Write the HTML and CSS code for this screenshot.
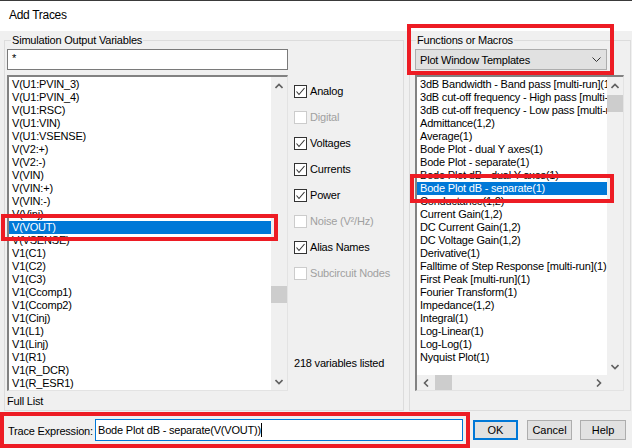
FILE: index.html
```html
<!DOCTYPE html>
<html lang="en">
<head>
  <meta charset="UTF-8" />
  <title>Add Traces</title>
  <link rel="stylesheet" href="styles.css">
</head>
<body>
  <div class="titlebar">Add Traces</div>

  <div class="panes">
    <div class="group group-left">
      <div class="group-title">Simulation Output Variables</div>
      <div class="filter">*</div>
      <div class="left-body">
        <div class="list list-left">
          <div class="items">
            <div class="item">V(U1:PVIN_3)</div>
            <div class="item">V(U1:PVIN_4)</div>
            <div class="item">V(U1:RSC)</div>
            <div class="item">V(U1:VIN)</div>
            <div class="item">V(U1:VSENSE)</div>
            <div class="item">V(V2:+)</div>
            <div class="item">V(V2:-)</div>
            <div class="item">V(VIN)</div>
            <div class="item">V(VIN:+)</div>
            <div class="item">V(VIN:-)</div>
            <div class="item">V(Vinj)</div>
            <div class="item sel">V(VOUT)</div>
            <div class="item">V(VSENSE)</div>
            <div class="item">V1(C1)</div>
            <div class="item">V1(C2)</div>
            <div class="item">V1(C3)</div>
            <div class="item">V1(Ccomp1)</div>
            <div class="item">V1(Ccomp2)</div>
            <div class="item">V1(Cinj)</div>
            <div class="item">V1(L1)</div>
            <div class="item">V1(Linj)</div>
            <div class="item">V1(R1)</div>
            <div class="item">V1(R_DCR)</div>
            <div class="item">V1(R_ESR1)</div>
          </div>
          <div class="vscroll">
            <div class="arrow"><svg width="8" height="6"><polyline points="0.5,5 4,1.5 7.5,5" /></svg></div>
            <div class="track"><div class="thumb thumb-left"></div></div>
            <div class="arrow"><svg width="8" height="6"><polyline points="0.5,1 4,4.5 7.5,1" /></svg></div>
          </div>
        </div>

        <div class="checks">
          <div class="check"><span class="box on"><svg width="11" height="11"><polyline points="1.5,5.5 4,8.5 9.5,2" /></svg></span>Analog</div>
          <div class="check off"><span class="box"></span>Digital</div>
          <div class="check"><span class="box on"><svg width="11" height="11"><polyline points="1.5,5.5 4,8.5 9.5,2" /></svg></span>Voltages</div>
          <div class="check"><span class="box on"><svg width="11" height="11"><polyline points="1.5,5.5 4,8.5 9.5,2" /></svg></span>Currents</div>
          <div class="check"><span class="box on"><svg width="11" height="11"><polyline points="1.5,5.5 4,8.5 9.5,2" /></svg></span>Power</div>
          <div class="check off"><span class="box"></span>Noise (V²/Hz)</div>
          <div class="check"><span class="box on"><svg width="11" height="11"><polyline points="1.5,5.5 4,8.5 9.5,2" /></svg></span>Alias Names</div>
          <div class="check off"><span class="box"></span>Subcircuit Nodes</div>
          <div class="count">218 variables listed</div>
        </div>
      </div>
      <div class="full-list">Full List</div>
    </div>

    <div class="group group-right">
      <div class="group-title">Functions or Macros</div>
      <div class="combo">
        <span>Plot Window Templates</span>
        <svg width="9" height="5"><polyline points="0.5,0.5 4.5,4.5 8.5,0.5" /></svg>
      </div>
      <div class="list list-right">
        <div class="items">
          <div class="item">3dB Bandwidth - Band pass [multi-run](1)</div>
          <div class="item">3dB cut-off frequency - High pass [multi-run](1)</div>
          <div class="item">3dB cut-off frequency - Low pass [multi-run](1)</div>
          <div class="item">Admittance(1,2)</div>
          <div class="item">Average(1)</div>
          <div class="item">Bode Plot - dual Y axes(1)</div>
          <div class="item">Bode Plot - separate(1)</div>
          <div class="item">Bode Plot dB - dual Y axes(1)</div>
          <div class="item sel">Bode Plot dB - separate(1)</div>
          <div class="item">Conductance(1,2)</div>
          <div class="item">Current Gain(1,2)</div>
          <div class="item">DC Current Gain(1,2)</div>
          <div class="item">DC Voltage Gain(1,2)</div>
          <div class="item">Derivative(1)</div>
          <div class="item">Falltime of Step Response [multi-run](1)</div>
          <div class="item">First Peak [multi-run](1)</div>
          <div class="item">Fourier Transform(1)</div>
          <div class="item">Impedance(1,2)</div>
          <div class="item">Integral(1)</div>
          <div class="item">Log-Linear(1)</div>
          <div class="item">Log-Log(1)</div>
          <div class="item">Nyquist Plot(1)</div>
        </div>
        <div class="vscroll">
          <div class="arrow"><svg width="8" height="6"><polyline points="0.5,5 4,1.5 7.5,5" /></svg></div>
          <div class="track"><div class="thumb thumb-right"></div></div>
          <div class="arrow"><svg width="8" height="6"><polyline points="0.5,1 4,4.5 7.5,1" /></svg></div>
        </div>
        <div class="hscroll">
          <div class="arrow"><svg width="6" height="8"><polyline points="5,0.5 1.5,4 5,7.5" /></svg></div>
          <div class="hthumb"></div>
          <div class="htrack"></div>
          <div class="arrow"><svg width="6" height="8"><polyline points="1,0.5 4.5,4 1,7.5" /></svg></div>
        </div>
        <div class="corner"></div>
      </div>
    </div>
  </div>

  <div class="bottom">
    <label class="expr-label">Trace Expression:</label>
    <div class="expr">Bode Plot dB - separate(V(VOUT))<span class="caret"></span></div>
    <button class="btn btn-ok">OK</button>
    <button class="btn btn-cancel">Cancel</button>
    <button class="btn btn-help">Help</button>
  </div>

  <!-- red highlight boxes drawn over the dialog -->
  <div class="mark mark-vout"></div>
  <div class="mark mark-combo"></div>
  <div class="mark mark-bode"></div>
  <div class="mark mark-expr"></div>
</body>
</html>
```

FILE: styles.css
```css
:root {
  --fundo: #f0f0f0;
  --azul: #0078d7;
  --vermelho: #ed1c24;
  --borda: #adadad;
}

* {
  margin: 0;
  padding: 0;
  box-sizing: border-box;
}

body {
  width: 632px;
  height: 448px;
  overflow: hidden;
  position: relative;
  background: var(--fundo);
  font-family: 'Liberation Sans', Arial, sans-serif;
  font-size: 11px;
  letter-spacing: -0.2px;
  color: #000;
}

.titlebar {
  height: 31px;
  background: #fff;
  border-top: 1px solid #3a3a3a;
  padding-left: 9px;
  line-height: 29px;
  font-size: 12px;
  letter-spacing: -0.3px;
}

.panes {
  display: flex;
  gap: 5px;
  padding: 9px 0 0 4px;
}

.group {
  height: 371px;
  border: 1px solid #dcdcdc;
}

.group-left {
  width: 400px;
}

.group-right {
  width: 222px;
}

.group-title {
  width: fit-content;
  margin: -7px 0 0 6px;
  padding: 0 1px;
  background: var(--fundo);
  line-height: 13px;
}

.filter {
  margin: 2px 0 0 2px;
  width: 281px;
  height: 21px;
  border: 1px solid #7a7a7a;
  background: #fff;
  padding-left: 4px;
  line-height: 17px;
}

.left-body {
  display: flex;
  margin-top: 5px;
}

/* list boxes */
.list {
  height: 316px;
  background: #fff;
  border-style: solid;
  border-width: 2px 1px 1px 2px;
  border-color: #828282 #e3e3e3 #e3e3e3 #828282;
}

.list-left {
  margin-left: 2px;
  width: 281px;
  display: flex;
}

.list-right {
  margin: 5px 0 0 5px;
  width: 209px;
  display: grid;
  grid-template-columns: 1fr 16px;
  grid-template-rows: 1fr 15px;
}

.items {
  flex: 1;
  overflow: hidden;
  padding-top: 1px;
}

.item {
  line-height: 13px;
  padding-left: 3px;
  white-space: nowrap;
}

.item.sel {
  background: var(--azul);
  color: #fff;
}

.vscroll {
  width: 16px;
  display: flex;
  flex-direction: column;
  background: var(--fundo);
}

.track {
  flex: 1;
}

.arrow {
  height: 17px;
  display: flex;
  align-items: center;
  justify-content: center;
}

.arrow svg polyline,
.combo svg polyline {
  fill: none;
  stroke: #606060;
  stroke-width: 1.6;
}

.thumb {
  height: 17px;
  background: #cdcdcd;
}

.thumb-left {
  margin-top: 192px;
}

.thumb-right {
  margin-top: 1px;
}

.hscroll {
  display: flex;
  background: var(--fundo);
}

.hscroll .arrow {
  width: 17px;
  height: 15px;
}

.hthumb {
  width: 17px;
  margin-left: 1px;
  background: #cdcdcd;
}

.htrack {
  flex: 1;
}

.corner {
  background: var(--fundo);
}

/* checkboxes */
.checks {
  margin-left: 6px;
  height: 316px;
  padding: 10px 0 21px;
  display: flex;
  flex-direction: column;
  white-space: nowrap;
}

.check {
  display: flex;
  align-items: center;
  gap: 3px;
  height: 13px;
  margin-bottom: 13px;
  line-height: 13px;
}

.box {
  width: 13px;
  height: 13px;
  border: 1px solid #cccccc;
  background: #fff;
  display: flex;
}

.box.on {
  border-color: #333;
}

.box svg polyline {
  fill: none;
  stroke: #333;
  stroke-width: 1.1;
}

.check.off {
  color: #a0a0a0;
}

.count {
  margin-top: auto;
  line-height: 13px;
}

.full-list {
  margin: 4px 0 0 2px;
  line-height: 13px;
}

/* combo box */
.combo {
  margin: 2px 0 0 5px;
  width: 192px;
  height: 21px;
  background: #e1e1e1;
  border: 1px solid var(--borda);
  display: flex;
  align-items: center;
  justify-content: space-between;
  padding: 0 5px 0 4px;
}

.combo svg polyline {
  stroke: #333;
  stroke-width: 1;
}

/* bottom row */
.bottom {
  display: flex;
  align-items: center;
  height: 37px;
  padding-left: 8px;
}

.expr-label {
  width: 87px;
  padding-top: 3px;
  white-space: nowrap;
}

.expr {
  width: 368px;
  height: 22px;
  border: 1px solid var(--azul);
  background: #fff;
  padding-left: 2px;
  line-height: 20px;
  display: flex;
  align-items: center;
  white-space: nowrap;
}

.caret {
  width: 1px;
  height: 14px;
  background: #000;
}

.btn {
  height: 20px;
  background: #e1e1e1;
  border: 1px solid var(--borda);
  font-family: inherit;
  font-size: 11px;
  color: #000;
}

.btn-ok {
  width: 45px;
  margin-left: 10px;
  border: 2px solid var(--azul);
}

.btn-cancel {
  width: 45px;
  margin-left: 9px;
}

.btn-help {
  width: 46px;
  margin-left: 8px;
}

/* annotation boxes */
.mark {
  position: absolute;
  border: 4px solid var(--vermelho);
}

.mark-vout {
  left: 1px;
  top: 214px;
  width: 277px;
  height: 27px;
}

.mark-combo {
  left: 407px;
  top: 24px;
  width: 207px;
  height: 51px;
}

.mark-bode {
  left: 410px;
  top: 174px;
  width: 204px;
  height: 29px;
}

.mark-expr {
  left: 0;
  top: 412px;
  width: 470px;
  height: 36px;
}
```
